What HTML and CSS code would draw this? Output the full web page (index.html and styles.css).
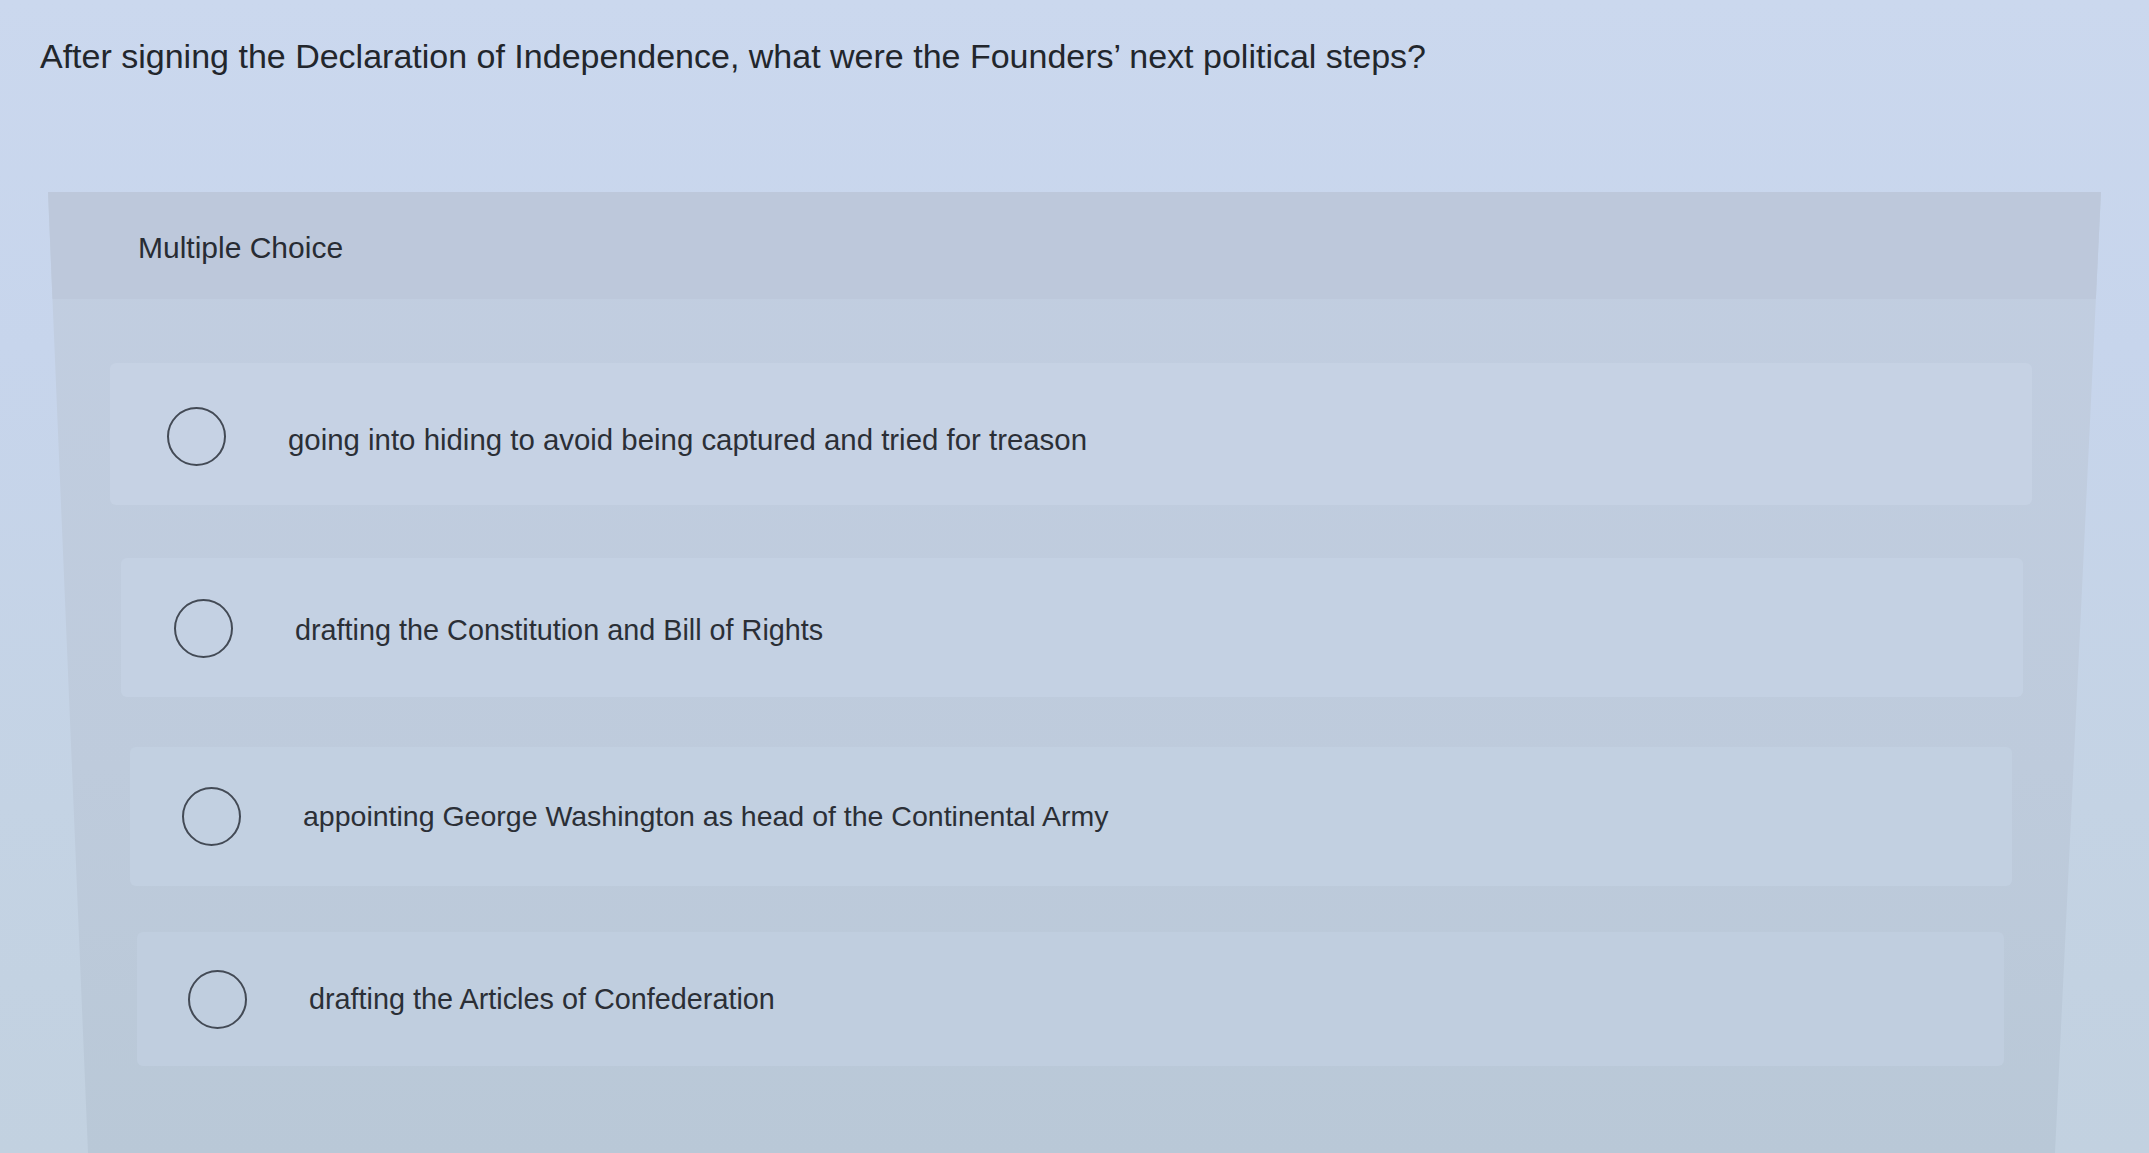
FILE: index.html
```html
<!DOCTYPE html>
<html lang="en">
<head>
<meta charset="utf-8">
<title>Multiple Choice</title>
<link rel="stylesheet" href="styles.css">
</head>
<body>
<div class="page">
  <h1 class="question">After signing the Declaration of Independence, what were the Founders’ next political steps?</h1>
  <section class="panel">
    <div class="panel-header">Multiple Choice</div>
    <div class="options">
      <div class="option"><span class="radio"></span><span class="label">going into hiding to avoid being captured and tried for treason</span></div>
      <div class="option"><span class="radio"></span><span class="label">drafting the Constitution and Bill of Rights</span></div>
      <div class="option"><span class="radio"></span><span class="label">appointing George Washington as head of the Continental Army</span></div>
      <div class="option"><span class="radio"></span><span class="label">drafting the Articles of Confederation</span></div>
    </div>
  </section>
</div>
</body>
</html>
```

FILE: styles.css
```css
html, body {
  margin: 0;
  padding: 0;
  height: 1153px;
  overflow: hidden;
}

body {
  background: linear-gradient(180deg, #cbd8ee 0%, #c7d5ec 30%, #c4d3e4 70%, #c2d1e0 100%);
  font-family: "Liberation Sans", Arial, sans-serif;
  color: #2a2e35;
}

.page {
  display: flex;
  flex-direction: column;
}

.question {
  margin: 0;
  padding: 36px 0 0 40px;
  font-size: 34px;
  line-height: 40px;
  font-weight: 400;
  color: #22262c;
}

.panel {
  margin: 116px 0 0 48px;
  width: 2053px;
  height: 961px;
  background: linear-gradient(180deg, #c2cee1 0%, #becbdc 60%, #b9c8d7 100%);
  clip-path: polygon(0 0, 100% 0, calc(100% - 46px) 100%, 40px 100%);
  display: flex;
  flex-direction: column;
}

.panel-header {
  height: 107px;
  padding: 5px 0 0 90px;
  box-sizing: border-box;
  display: flex;
  align-items: center;
  background: #bdc8db;
  font-size: 30px;
  color: #282c33;
}

.options {
  padding-top: 64px;
  display: flex;
  flex-direction: column;
  gap: 50px;
}

.option {
  height: 139px;
  display: flex;
  align-items: center;
  border-radius: 6px;
  background: #c6d2e4;
}

.radio {
  flex: none;
  width: 55px;
  height: 55px;
  border: 2.5px solid #434a55;
  border-radius: 50%;
  margin-right: 62px;
}

.label {
  font-size: 28.8px;
  color: #2b2f36;
}

.option:nth-child(1) { margin: 0 69px 0 62px; height: 142px; padding-left: 57px; }
.option:nth-child(1) .radio { margin-top: 5px; }
.option:nth-child(1) .label { font-size: 29.4px; padding-top: 12px; }

.option:nth-child(2) { margin: 3px 78px 0 73px; padding-left: 53px; background: #c4d1e3; }
.option:nth-child(2) .radio { margin-top: 2px; }
.option:nth-child(2) .label { padding-top: 6px; }

.option:nth-child(3) { margin: 0 89px 0 82px; padding-left: 52px; background: #c2d0e1; }
.option:nth-child(3) .label { font-size: 28.5px; }

.option:nth-child(4) { margin: -4px 97px 0 89px; padding-left: 51px; background: #c0cedf; height: 134px; }
```
